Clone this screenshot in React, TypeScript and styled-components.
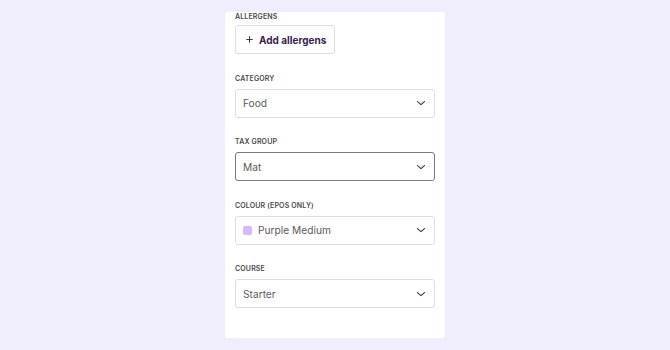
import React from "react";
import styled, { createGlobalStyle } from "styled-components";

const Global = createGlobalStyle`
  html, body { margin: 0; padding: 0; }
  body {
    background: #f0eefc;
    font-family: Inter, "Noto Sans", sans-serif;
    height: 350px;
    overflow: hidden;
  }
`;

const Page = styled.div`
  display: flex;
  justify-content: center;
  padding-top: 12px;
`;

const Card = styled.div`
  width: 220px;
  height: 326px;
  background: #ffffff;
  border-radius: 3px;
  overflow: hidden;
  box-sizing: border-box;
  padding: 0 10px;
`;

const Inner = styled.div`
  display: flex;
  flex-direction: column;
  gap: 19.5px;
`;

const Field = styled.div<{ $tight?: boolean }>`
  display: flex;
  flex-direction: column;
  gap: ${(p) => (p.$tight ? "3px" : "5px")};
`;

const Label = styled.div`
  font-size: 7px;
  line-height: 10px;
  font-weight: 600;
  letter-spacing: 0.15px;
  text-transform: uppercase;
  color: #4a4a4a;
`;

const AddButton = styled.button`
  align-self: flex-start;
  width: 100px;
  height: 29px;
  box-sizing: border-box;
  display: flex;
  align-items: center;
  gap: 6px;
  padding: 0 0 0 10px;
  border: 1px solid #dcdcdc;
  border-radius: 3px;
  background: #fff;
  font-family: inherit;
  font-size: 10px;
  font-weight: 700;
  white-space: nowrap;
  color: #3a1d4d;
  cursor: pointer;
`;

const Select = styled.div<{ $focused?: boolean }>`
  height: 29px;
  box-sizing: border-box;
  display: flex;
  align-items: center;
  padding: 0 8px 0 7px;
  border: 1px solid ${(p) => (p.$focused ? "#7a7a7a" : "#dedede")};
  border-radius: 3px;
  background: #fff;
  font-size: 10.2px;
  color: #5a5a5a;
`;

const Value = styled.span`
  flex: 1;
  display: flex;
  align-items: center;
  gap: 6px;
`;

const Swatch = styled.span<{ $color: string }>`
  width: 9px;
  height: 9px;
  border-radius: 2px;
  background: ${(p) => p.$color};
`;

const Chevron = () => (
  <svg width="10" height="10" viewBox="0 0 10 10" fill="none">
    <path d="M1.5 3.6 L5 6.6 L8.5 3.6" stroke="#333" strokeWidth="1.1" strokeLinecap="round" strokeLinejoin="round" />
  </svg>
);

const Plus = () => (
  <svg width="7" height="7" viewBox="0 0 7 7" fill="none">
    <path d="M3.5 0.3 V6.7 M0.3 3.5 H6.7" stroke="#3a3a3a" strokeWidth="1" />
  </svg>
);

const fields: { label: string; value: string; focused?: boolean; swatch?: string }[] = [
  { label: "Category", value: "Food" },
  { label: "Tax group", value: "Mat", focused: true },
  { label: "Colour (EPOS only)", value: "Purple Medium", swatch: "#d6b9fb" },
  { label: "Course", value: "Starter" },
];

export default function App() {
  return (
    <>
      <Global />
      <Page>
        <Card>
          <Inner>
            <Field $tight>
              <Label>Allergens</Label>
              <AddButton>
                <Plus />
                Add allergens
              </AddButton>
            </Field>
            {fields.map((f) => (
              <Field key={f.label}>
                <Label>{f.label}</Label>
                <Select $focused={f.focused}>
                  <Value>
                    {f.swatch && <Swatch $color={f.swatch} />}
                    {f.value}
                  </Value>
                  <Chevron />
                </Select>
              </Field>
            ))}
          </Inner>
        </Card>
      </Page>
    </>
  );
}
